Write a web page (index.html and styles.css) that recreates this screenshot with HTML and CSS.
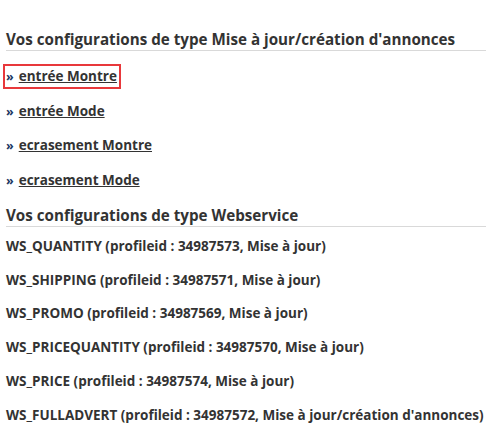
FILE: index.html
```html
<!DOCTYPE html>
<html lang="fr">
<head>
<meta charset="utf-8">
<title>Configurations</title>
<link rel="stylesheet" href="styles.css">
</head>
<body>
<div class="page">
  <h3 class="section-title">Vos configurations de type Mise à jour/création d'annonces</h3>
  <ul class="config-list">
    <li class="config-item selected"><span class="bullet">»</span><a class="config-link" href="#">entrée Montre</a></li>
    <li class="config-item"><span class="bullet">»</span><a class="config-link" href="#">entrée Mode</a></li>
    <li class="config-item"><span class="bullet">»</span><a class="config-link" href="#">ecrasement Montre</a></li>
    <li class="config-item"><span class="bullet">»</span><a class="config-link" href="#">ecrasement Mode</a></li>
  </ul>
  <h3 class="section-title second">Vos configurations de type Webservice</h3>
  <ul class="ws-list">
    <li class="ws-item">WS_QUANTITY (profileid : 34987573, Mise à jour)</li>
    <li class="ws-item">WS_SHIPPING (profileid : 34987571, Mise à jour)</li>
    <li class="ws-item">WS_PROMO (profileid : 34987569, Mise à jour)</li>
    <li class="ws-item">WS_PRICEQUANTITY (profileid : 34987570, Mise à jour)</li>
    <li class="ws-item">WS_PRICE (profileid : 34987574, Mise à jour)</li>
    <li class="ws-item">WS_FULLADVERT (profileid : 34987572, Mise à jour/création d'annonces)</li>
  </ul>
</div>
</body>
</html>
```

FILE: styles.css
```css
html, body {
  margin: 0;
  padding: 0;
  background: #ffffff;
}

.page {
  padding: 29px 1px 0 6px;
  font-family: "Open Sans", "DejaVu Sans", sans-serif;
  color: #333333;
}

.section-title {
  margin: 0;
  font-size: 15.2px;
  font-weight: 700;
  line-height: 20px;
  padding-bottom: 1px;
  border-bottom: 1px solid #d9d9d9;
  color: #333333;
}

.section-title.second {
  margin-top: 12px;
}

.config-list,
.ws-list {
  list-style: none;
  margin: 0;
  padding: 0;
}

.config-list {
  padding-top: 13px;
}

.config-item,
.ws-item {
  font-size: 13.5px;
  font-weight: 700;
  line-height: 18px;
  margin-bottom: 15.7px;
}

.config-item {
  margin-left: -3px;
  padding: 1px 2px 1px 0;
  width: fit-content;
  border: 2px solid transparent;
  margin-bottom: 9.7px;
}

.config-item.selected {
  border-color: #e8383b;
}

.bullet {
  display: inline-block;
  color: #1b3763;
  font-size: 12.5px;
  margin-left: 1px;
  margin-right: 5px;
}

.config-link {
  color: #333333;
  text-decoration: underline;
}

.ws-list {
  padding-top: 10px;
}
```
